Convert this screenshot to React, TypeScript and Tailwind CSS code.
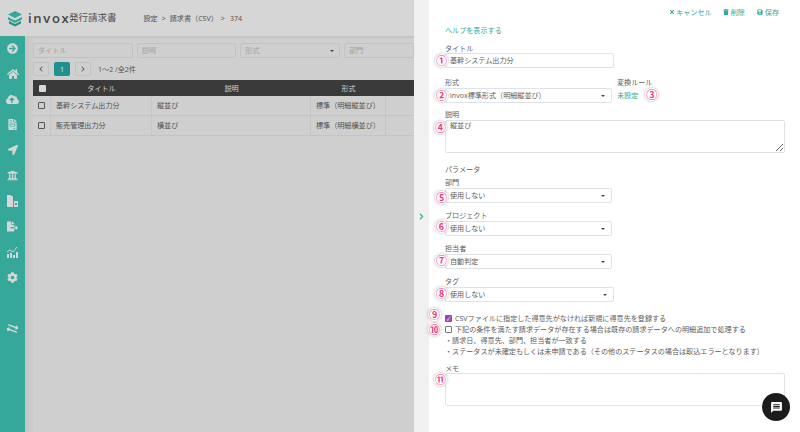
import {
  FaArrowCircleRight, FaHome, FaCloudUploadAlt, FaFileInvoice, FaLocationArrow, FaUniversity,
  FaFileExport, FaCog, FaExchangeAlt, FaTimes, FaTrash, FaSave, FaChevronLeft, FaChevronRight,
} from "react-icons/fa";
import { MdMessage } from "react-icons/md";
import type { ReactNode } from "react";

const fontStack = "font-['Open_Sans','Noto_Sans_CJK_JP',sans-serif]";

function Badge({ n, className = "-left-[11px] top-0" }: { n: string; className?: string }) {
  return (
    <span className={`absolute ${className} z-10 flex h-[13px] w-[13px] items-center justify-center rounded-full bg-white/90 text-[11px] font-bold leading-none text-[#ee3d84] shadow-[0_0_3px_rgba(0,0,0,0.35)]`}>
      {n}
    </span>
  );
}

function Label({ children, className = "" }: { children: ReactNode; className?: string }) {
  return <div className={`h-[10px] text-[7.1px] leading-[10px] text-[#5c5c5c] ${className}`}>{children}</div>;
}

function SelectBox({ value, badge, badgeTop = "-left-[11px] top-0", width = "w-[167px]" }: { value: string; badge: string; badgeTop?: string; width?: string }) {
  return (
    <div className={`relative mt-px flex h-[15px] ${width} items-center justify-between rounded-[2px] border border-[#dfe3e8] bg-white pl-[4px] pr-[6px] text-[7.1px] text-[#5c5c5c]`}>
      <Badge n={badge} className={badgeTop} />
      <span>{value}</span>
      <span className="h-0 w-0 border-x-[2px] border-t-[2px] border-x-transparent border-t-[#444]" />
    </div>
  );
}

function CompanyIcon() {
  return (
    <svg width="11" height="12" viewBox="0 0 11 12" fill="#d6d6d6">
      <path d="M0 0h3l3 1.500V12H0zM7 6h4v6H7z" />
      <path d="M8 8h2v2H8z" fill="#35a899" />
    </svg>
  );
}

function ChartIcon() {
  return (
    <svg width="11" height="12" viewBox="0 0 11 12" fill="#d6d6d6">
      <path d="M0 8h2v4H0zM3 7h2v5H3zM6 9h2v3H6zM9 6h2v6H9z" />
      <path d="M0 6l3-2 3 2 4-5" fill="none" stroke="#d6d6d6" strokeWidth="1" />
    </svg>
  );
}

const sideIcons = [
  <FaArrowCircleRight size={11} />,
  <FaHome size={12} />,
  <FaCloudUploadAlt size={13} />,
  <FaFileInvoice size={11} />,
  <FaLocationArrow size={10} />,
  <FaUniversity size={11} />,
  <CompanyIcon />,
  <FaFileExport size={11} />,
  <ChartIcon />,
  <FaCog size={11} />,
];

const rows = [
  { title: "基幹システム出力分", desc: "縦並び", format: "標準（明細縦並び）" },
  { title: "販売管理出力分", desc: "横並び", format: "標準（明細横並び）" },
];

function FilterBox({ text, className = "w-[101px]", caret }: { text: string; className?: string; caret?: boolean }) {
  return (
    <div className={`flex h-[15px] ${className} items-center justify-between rounded-[2px] border border-[#c2c2c2] pl-[4px] pr-[5px] text-[7.1px] text-[#a2a2a2]`}>
      <span>{text}</span>
      {caret && <span className="h-0 w-0 border-x-[2px] border-t-[2px] border-x-transparent border-t-[#444]" />}
    </div>
  );
}

function ListSide() {
  return (
    <div className="flex h-full w-[414px] shrink-0 flex-col bg-[#cfcfcf]">
      <div className="flex h-[36px] shrink-0 items-center bg-[#d6d6d6] pl-[7px]">
        <svg width="16" height="17" viewBox="0 0 16 17" className="mr-[5px]">
          <path d="M8 1l7 3.500L8 8 1 4.500z" fill="#35a899" />
          <path d="M1 7l7 3.500L15 7v2.500L8 13 1 9.500z" fill="#35a899" />
          <path d="M2 11l6 3 6-3v2.500L8 16.500 2 13.500z" fill="#2c8f83" />
        </svg>
        <span className="w-[41px] text-[13px] font-semibold leading-none tracking-[1.700px] text-[#454545]">invox</span>
        <span className="text-[9.500px] leading-none text-[#505050]">発行請求書</span>
        <div className="ml-[27px] flex items-center text-[7.1px] text-[#505050]">
          <span>設定</span>
          <span className="mx-[4px]">&gt;</span>
          <span>請求書（CSV）</span>
          <span className="ml-[3px] mr-[5px]">&gt;</span>
          <span>374</span>
        </div>
      </div>
      <div className="flex min-h-0 flex-1">
        <div className="flex w-[25px] shrink-0 flex-col bg-[#35a899] text-[#d6d6d6]">
          {sideIcons.map((icon, i) => (
            <div key={i} className="flex h-[25.4px] items-center justify-center">{icon}</div>
          ))}
          <div className="mt-auto mb-[98px] flex justify-center"><FaExchangeAlt size={11} className="rotate-[20deg]" /></div>
        </div>
        <div className="w-[4px] shrink-0 bg-[#c6c6c6]" />
        <div className="w-[4px] shrink-0 border-t-[2px] border-[#c6c6c6] bg-[#cbcbcb]" />
        <div className="min-w-0 flex-1 border-t-[2px] border-[#c6c6c6] pt-[5px]">
          <div className="flex gap-[4px]">
            <FilterBox text="タイトル" />
            <FilterBox text="説明" />
            <FilterBox text="形式" caret />
            <FilterBox text="部門" className="w-[70px] shrink-0" />
          </div>
          <div className="mt-[4px] flex h-[14px] items-center text-[7.1px] text-[#555]">
            <div className="flex h-[14px] w-[16px] items-center justify-center rounded-[2px] border border-[#c2c2c2] text-[#666]"><FaChevronLeft size={6} /></div>
            <div className="ml-[5px] flex h-[14px] w-[16px] items-center justify-center rounded-[2px] bg-[#21918f] text-[#e4e4e4]">1</div>
            <div className="ml-[5px] flex h-[14px] w-[16px] items-center justify-center rounded-[2px] border border-[#c2c2c2] text-[#666]"><FaChevronRight size={6} /></div>
            <span className="ml-[7px]">1〜2 /全2件</span>
          </div>
          <div className="mt-[4px] w-[381px] text-[7.1px]">
            <div className="flex h-[16px] items-center bg-[#3a3a3a] text-[#d0d0d0]">
              <div className="flex w-[18px] justify-center"><span className="h-[7px] w-[7px] rounded-[1px] bg-[#d8d8d8]" /></div>
              <div className="w-[101px] text-center">タイトル</div>
              <div className="w-[159px] text-center">説明</div>
              <div className="w-[75px] text-center">形式</div>
            </div>
            {rows.map((r) => (
              <div key={r.title} className="flex h-[20px] items-center border-b border-[#c4c4c4] text-[#505050]">
                <div className="flex h-full w-[18px] items-center justify-center border-r border-[#c4c4c4]">
                  <span className="h-[7px] w-[7px] rounded-[1px] border border-[#555]" />
                </div>
                <div className="flex h-full w-[101px] items-center border-r border-[#c4c4c4] pl-[5px]">{r.title}</div>
                <div className="flex h-full w-[159px] items-center border-r border-[#c4c4c4] pl-[5px]">{r.desc}</div>
                <div className="flex h-full w-[75px] items-center border-r border-[#c4c4c4] pl-[5px]">{r.format}</div>
              </div>
            ))}
          </div>
        </div>
      </div>
    </div>
  );
}

function FormPanel() {
  return (
    <div className="relative flex-1 bg-white pl-[16px] text-[#5c5c5c]">
      <div className="flex h-[24px] items-center justify-end pr-[21px] text-[7.1px] text-[#35a899]">
        <span className="flex items-center gap-[1px]"><FaTimes size={6} />キャンセル</span>
        <span className="ml-[11px] flex items-center gap-[2px]"><FaTrash size={6} />削除</span>
        <span className="ml-[12px] flex items-center gap-[2px]"><FaSave size={6} />保存</span>
      </div>
      <div className="mt-[1px] h-[10px] text-[7.1px] leading-[10px] text-[#35a899]">ヘルプを表示する</div>
      <Label className="mt-[8px]">タイトル</Label>
      <div className="relative h-[15px] w-[169px] rounded-[2px] border border-[#dfe3e8] pl-[4px] text-[7.1px] leading-[13px]">
        <Badge n="①" />
        基幹システム出力分
      </div>
      <div className="mt-[9px] flex">
        <div>
          <Label>形式</Label>
          <SelectBox value="invox標準形式（明細縦並び）" badge="②" />
        </div>
        <div className="ml-[5px]">
          <Label>変換ルール</Label>
          <div className="relative mt-[3px] w-fit text-[7.1px] leading-[10px] text-[#35a899]">
            未設定
            <Badge n="③" className="-right-[20px] -top-[2px]" />
          </div>
        </div>
      </div>
      <Label className="mt-[6px]">説明</Label>
      <div className="relative mt-px w-[340px]">
        <Badge n="④" className="-left-[11px] top-px" />
        <textarea readOnly defaultValue="縦並び" className="block h-[33px] w-full rounded-[2px] border border-[#dfe3e8] pl-[4px] text-[7.1px] leading-[9px] text-[#5c5c5c] outline-none" />
      </div>
      <Label className="mt-[11px]">パラメータ</Label>
      <Label className="mt-[3px]">部門</Label>
      <SelectBox value="使用しない" badge="⑤" badgeTop="-left-[11px] top-[2px]" />
      <Label className="mt-[7px]">プロジェクト</Label>
      <SelectBox value="使用しない" badge="⑥" badgeTop="-left-[11px] -top-[2px]" />
      <Label className="mt-[7px]">担当者</Label>
      <SelectBox value="自動判定" badge="⑦" badgeTop="-left-[11px] -top-px" />
      <Label className="mt-[7px]">タグ</Label>
      <SelectBox value="使用しない" badge="⑧" badgeTop="-left-[11px] -top-px" width="w-[169px]" />
      <div className="relative mt-[11px] flex h-[11px] items-center gap-[3px] text-[7.1px]">
        <Badge n="⑨" className="-left-[17px] -top-[5px]" />
        <span className="flex h-[7px] w-[7px] items-center justify-center rounded-[1px] bg-[#9c3fb5] text-[6px] leading-none text-white">✓</span>
        CSVファイルに指定した得意先がなければ新規に得意先を登録する
      </div>
      <div className="relative flex h-[11px] items-center gap-[3px] text-[7.1px]">
        <Badge n="⑩" className="-left-[17px] -top-px" />
        <span className="h-[7px] w-[7px] rounded-[1px] border border-[#777]" />
        下記の条件を満たす請求データが存在する場合は既存の請求データへの明細追加で処理する
      </div>
      <div className="h-[11px] text-[7.1px] leading-[11px]">・請求日、得意先、部門、担当者が一致する</div>
      <div className="h-[11px] text-[7.1px] leading-[11px]">・ステータスが未確定もしくは未申請である（その他のステータスの場合は取込エラーとなります）</div>
      <Label className="mt-[6px]">メモ</Label>
      <div className="relative w-[340px]">
        <Badge n="⑪" />
        <textarea readOnly className="block h-[33px] w-full rounded-[2px] border border-[#dfe3e8] outline-none" />
      </div>
      <div className="absolute bottom-[11px] right-[10px] flex h-[28px] w-[28px] items-center justify-center rounded-full bg-[#1c1c1c] text-white">
        <MdMessage size={13} />
      </div>
    </div>
  );
}

export default function App() {
  return (
    <div className={`flex h-[432px] w-[800px] overflow-hidden ${fontStack}`}>
      <ListSide />
      <div className="flex w-[15px] shrink-0 items-center justify-center bg-[#f0f0f0] text-[#35a899]">
        <FaChevronRight size={7} />
      </div>
      <FormPanel />
    </div>
  );
}
